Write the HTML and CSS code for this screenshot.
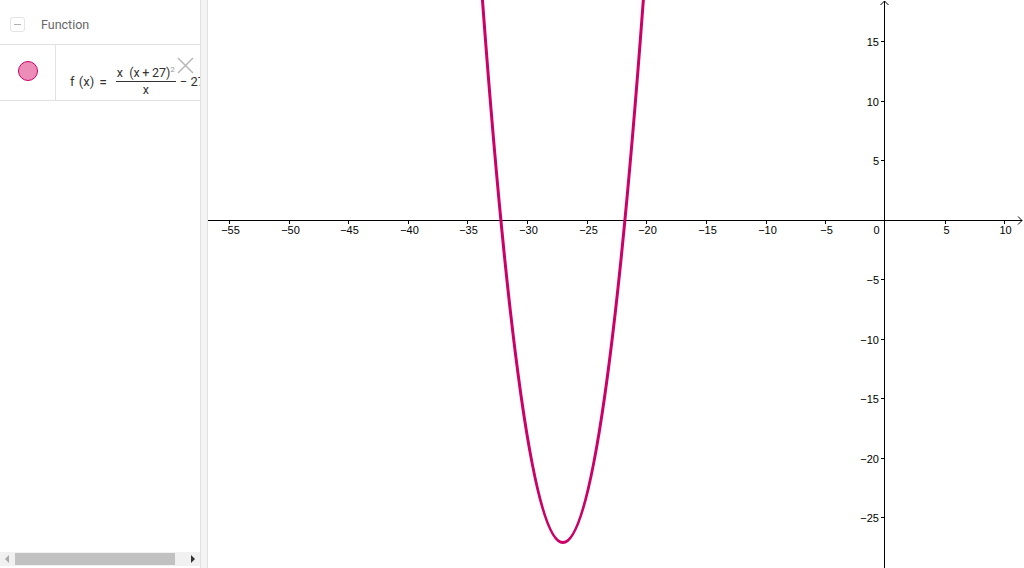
FILE: index.html
```html
<!DOCTYPE html>
<html>
<head>
<meta charset="utf-8">
<link rel="stylesheet" href="styles.css">
</head>
<body>
<div class="app">
  <div class="panel">
    <div class="header">
      <span class="collapse"><span class="dash"></span></span>
      <span class="title">Function</span>
    </div>
    <div class="row">
      <div class="marker"><span class="dot"></span></div>
      <div class="formula">
        <span class="lhs">f (x)</span>
        <span class="eq">=</span>
        <span class="frac">
          <span class="num">x&nbsp;&nbsp;(x&thinsp;+&thinsp;27)<sup>2</sup></span>
          <span class="den">x</span>
        </span>
        <span class="rest">− 27</span>
        <svg class="close" width="17" height="17" viewBox="0 0 17 17"><path d="M1 1 L16 16 M16 1 L1 16" stroke="#b8b8b8" stroke-width="1.5" fill="none"/></svg>
      </div>
    </div>
    <div class="spacer"></div>
    <div class="scrollbar">
      <svg class="arrow" width="8" height="10" viewBox="0 0 8 10"><path d="M6 1 L2 5 L6 9 Z" fill="#a8a8a8"/></svg>
      <div class="track"><div class="thumb"></div></div>
      <svg class="arrow" width="8" height="10" viewBox="0 0 8 10"><path d="M2 1 L6 5 L2 9 Z" fill="#333"/></svg>
    </div>
  </div>
  <div class="divider"></div>
  <div class="graph">
    <svg width="816" height="568" viewBox="0 0 816 568" class="plot">
      <g stroke="#000" stroke-width="1" fill="none">
        <line x1="0" y1="220.5" x2="814" y2="220.5"/>
        <path d="M810 216.5 L814 220.5 L810 224.5"/>
        <line x1="676.5" y1="1" x2="676.5" y2="568"/>
        <path d="M672.5 5 L676.5 1 L680.5 5"/>
      </g>
      <g stroke="#000" stroke-width="1" id="xticks"></g>
      <g stroke="#000" stroke-width="1" id="yticks"></g>
      <g class="xl" id="xlabels"></g>
      <g class="yl" id="ylabels"></g>
      <path d="M271.4,-42 Q354.9,1127.2 438.4,-42" stroke="#cc0066" stroke-width="3" fill="none"/>
    </svg>
  </div>
</div>
<script src="app.js"></script>
</body>
</html>
```

FILE: app.js
```js
(function(){
  var NS = "http://www.w3.org/2000/svg";
  var ox = 677, s = 11.93, sy = 11.9;
  var xt = document.getElementById("xticks");
  var yt = document.getElementById("yticks");
  var xl = document.getElementById("xlabels");
  var yl = document.getElementById("ylabels");
  function mk(tag, attrs, parent, text){
    var e = document.createElementNS(NS, tag);
    for (var k in attrs) e.setAttribute(k, attrs[k]);
    if (text !== undefined) e.textContent = text;
    parent.appendChild(e);
  }
  function lbl(v){ return v < 0 ? "\u2212" + (-v) : String(v); }
  for (var v = -55; v <= 10; v += 5){
    var x = Math.round(ox + v * s) + 0.5;
    if (v === 0){
      mk("text", {x: 668.5, y: 234, "text-anchor": "middle"}, xl, "0");
      continue;
    }
    mk("line", {x1: x, y1: 220.5, x2: x, y2: 224}, xt);
    mk("text", {x: x + 1, y: 234, "text-anchor": "middle"}, xl, lbl(v));
  }
  for (var w = -25; w <= 15; w += 5){
    if (w === 0) continue;
    var y = Math.floor(220 - w * sy) + 0.5;
    mk("line", {x1: 673, y1: y, x2: 676.5, y2: y}, yt);
    mk("text", {x: 671, y: y + 4, "text-anchor": "end"}, yl, lbl(w));
  }
})();
```

FILE: styles.css
```css
html, body {
  margin: 0;
  padding: 0;
  background: #fff;
}
body {
  font-family: Roboto, "Liberation Sans", sans-serif;
  width: 1024px;
  height: 568px;
  overflow: hidden;
}
.app {
  display: flex;
  width: 1024px;
  height: 568px;
}
.panel {
  width: 200px;
  height: 568px;
  display: flex;
  flex-direction: column;
  background: #fff;
  overflow: hidden;
}
.header {
  height: 45px;
  box-sizing: border-box;
  border-bottom: 1px solid #e2e2e2;
  display: flex;
  align-items: center;
}
.collapse {
  width: 13px;
  height: 13px;
  margin-left: 10px;
  margin-right: 16px;
  border: 1px solid #e4e4e4;
  border-radius: 3px;
  display: flex;
  align-items: center;
  justify-content: center;
  margin-top: 5px;
}
.dash {
  width: 7px;
  height: 1px;
  background: #b0b0b0;
}
.title {
  font-size: 12.5px;
  color: #666;
  margin-top: 4px;
}
.row {
  height: 56px;
  box-sizing: border-box;
  border-bottom: 1px solid #e2e2e2;
  display: flex;
}
.marker {
  width: 56px;
  border-right: 1px solid #e2e2e2;
  display: flex;
  justify-content: center;
  align-items: center;
  padding-bottom: 4px;
  box-sizing: border-box;
}
.dot {
  width: 18px;
  height: 18px;
  border-radius: 50%;
  background: #ec8db8;
  border: 1px solid #cc0066;
}
.formula {
  position: relative;
  flex: 1;
  display: flex;
  align-items: center;
  padding-left: 14px;
  padding-top: 18px;
  font-size: 13px;
  color: #333;
  white-space: nowrap;
  overflow: hidden;
}
.lhs {
  word-spacing: 1px;
}
.eq {
  margin-left: 5px;
  font-size: 14px;
}
.frac {
  display: inline-flex;
  flex-direction: column;
  align-items: center;
  margin-left: 9px;
  font-size: 12.5px;
}
.num {
  padding: 0 1px 1px 1px;
  border-bottom: 1px solid #333;
  line-height: 14px;
}
.num sup {
  font-size: 8px;
  color: #999;
  vertical-align: 5px;
  line-height: 0;
}
.den {
  line-height: 16px;
}
.rest {
  margin-left: 4px;
}
.close {
  position: absolute;
  left: 121px;
  top: 12px;
}
.spacer {
  flex: 1;
}
.scrollbar {
  height: 14px;
  margin-bottom: 2px;
  background: #f1f1f1;
  display: flex;
  align-items: center;
}
.arrow {
  flex: none;
  margin: 0 3px;
}
.track {
  flex: 1;
  height: 12px;
  padding: 0 1px;
  display: flex;
}
.thumb {
  width: 160px;
  height: 12px;
  background: #c1c1c1;
}
.divider {
  width: 6px;
  height: 568px;
  background: #f4f4f4;
  border-left: 1px solid #e0e0e0;
  border-right: 1px solid #e0e0e0;
}
.graph {
  width: 816px;
  height: 568px;
  background: #fff;
}
.plot {
  display: block;
}
.xl text, .yl text {
  font-family: "Liberation Sans", Arial, sans-serif;
  font-size: 11px;
  fill: #000;
}
```
